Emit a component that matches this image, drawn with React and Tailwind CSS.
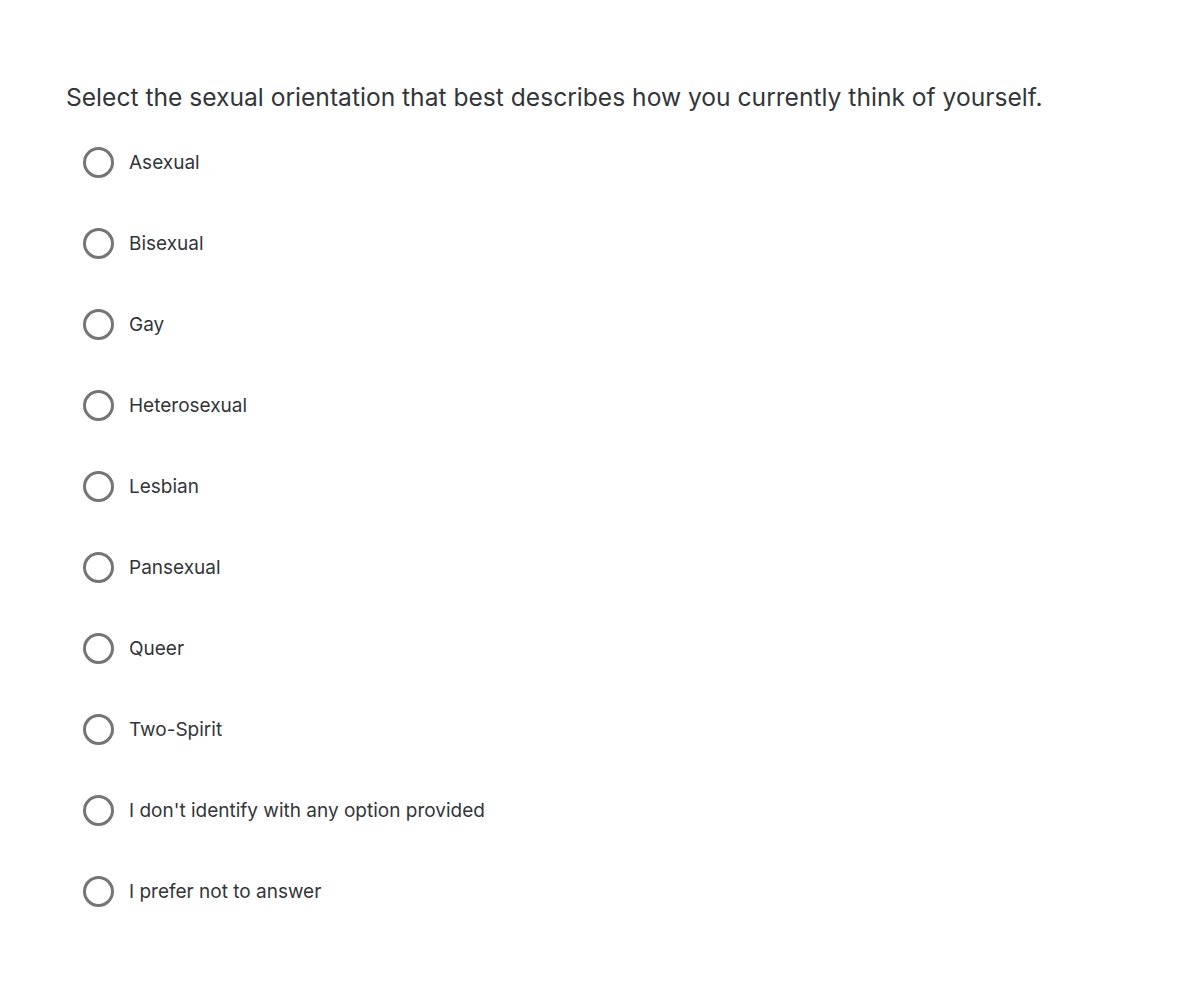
const OPTIONS = [
  "Asexual",
  "Bisexual",
  "Gay",
  "Heterosexual",
  "Lesbian",
  "Pansexual",
  "Queer",
  "Two-Spirit",
  "I don't identify with any option provided",
  "I prefer not to answer",
];

export default function App() {
  return (
    <div
      className="min-h-[985px] bg-white text-[#32363a] pl-[66px] pt-[80px]"
      style={{ fontFamily: "Inter, 'Open Sans', sans-serif" }}
    >
      <h1 className="text-[24.6px] leading-[34px] font-normal">
        Select the sexual orientation that best describes how you currently think of yourself.
      </h1>

      <div className="mt-[8px] flex flex-col">
        {OPTIONS.map((label) => (
          <label key={label} className="flex items-center h-[81px] pl-[17px] cursor-pointer">
            <span className="w-[31px] h-[31px] rounded-full border-[3px] border-[#757575] shrink-0" />
            <span className="ml-[15px] text-[19px] leading-[24px]">{label}</span>
          </label>
        ))}
      </div>
    </div>
  );
}
